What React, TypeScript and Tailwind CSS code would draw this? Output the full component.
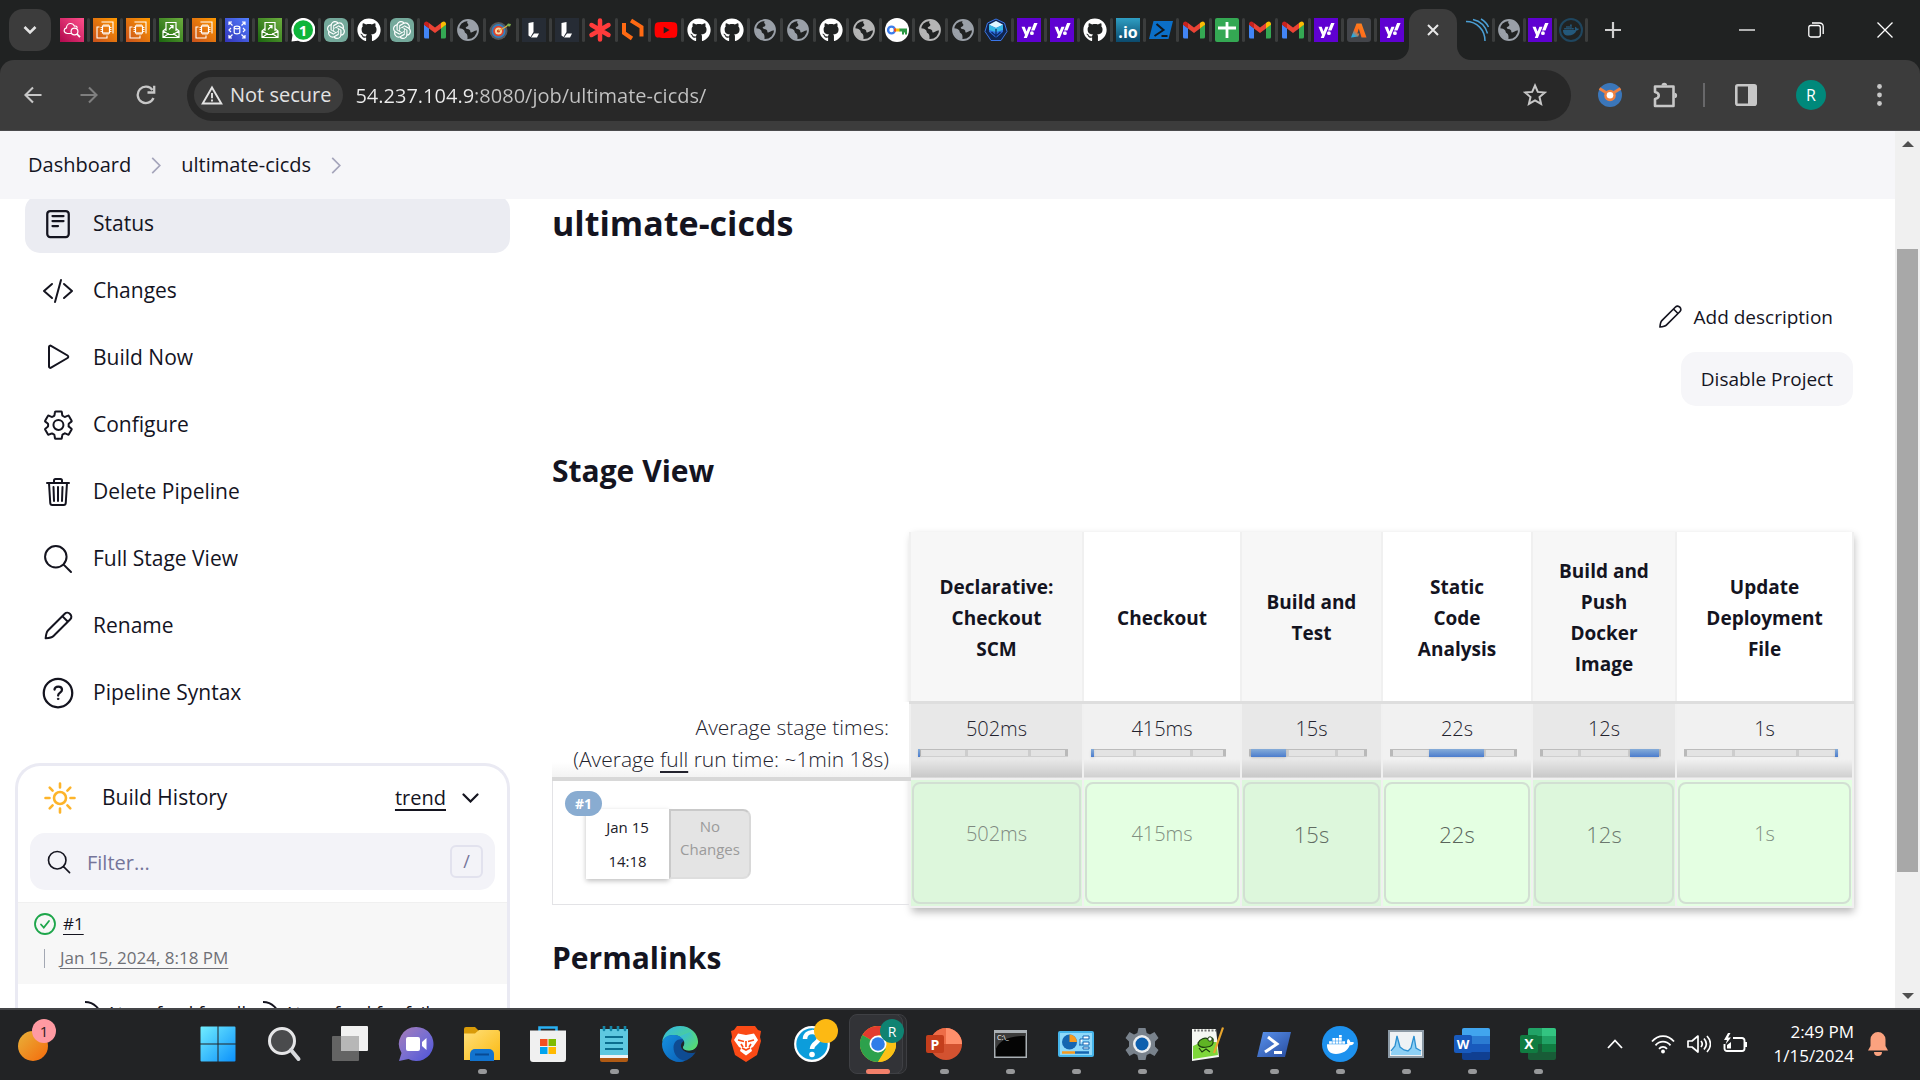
import React from "react";
import { FaGithub, FaYoutube, FaYahoo, FaDocker } from "react-icons/fa";
import { SiOpenai } from "react-icons/si";

type Kids = { children: React.ReactNode };

/* ---------- Tab favicons (24 x 24) ---------- */

function Aws({ id, from, to, children }: Kids & { id: string; from: string; to: string }) {
  return (
    <svg viewBox="0 0 24 24" className="size-6" fill="none" stroke="#fff" strokeWidth="1.2">
      <defs>
        <linearGradient id={id} x1="0" y1="1" x2="1" y2="0">
          <stop offset="0" stopColor={from} />
          <stop offset="1" stopColor={to} />
        </linearGradient>
      </defs>
      <rect width="24" height="24" fill={`url(#${id})`} stroke="none" />
      {children}
    </svg>
  );
}

const CloudWatch = () => (
  <Aws id="aws-pink" from="#b0084d" to="#ff4f8b">
    <path d="M11 15.500H7.500C5.500 15.500 4 14 4.200 12.300c.1-1.500 1.200-2.300 2.300-2.500C6.500 7.500 8.300 5.500 10.500 5.500c2 0 3.300 1.200 3.900 2.600 1.500-.4 2.600.5 2.900 1.700" />
    <circle cx="14.500" cy="13.500" r="3.400" />
    <path d="M17 16l3 3.200" strokeWidth="1.800" />
  </Aws>
);
const Ec2 = () => (
  <Aws id="aws-orange" from="#c8511b" to="#ff9900">
    <rect x="9.500" y="8" width="7" height="7" />
    <path d="M11 8V6M13 8V6M15 8V6M11 17v-2M13 17v-2M15 17v-2M7.500 9.500h2M7.500 11.500h2M7.500 13.500h2M16.500 9.500h2M16.500 11.500h2M16.500 13.500h2" strokeWidth=".9" />
    <path d="M9 4.500V4h11v11h-.5M6.500 9H4v11h10v-2.500" strokeWidth="1.100" />
  </Aws>
);
const Ses = () => (
  <Aws id="aws-green" from="#1b660f" to="#6cae3e">
    <path d="M7 13V4.500h10V13M7 10.500L4 13v6.500h16V13l-3-2.500M4 13l6 3.500h4l6-3.500M4 19.500l6-4M20 19.500l-6-4M10 11.500l4-4M11 7.500h3v3" />
  </Aws>
);
const Asg = () => (
  <Aws id="aws-blue" from="#3334b9" to="#527fff">
    <path d="M4 7V4h3M4 4l3.500 3.500M20 7V4h-3M20 4l-3.500 3.500M4 17v3h3M4 20l3.500-3.500M20 17v3h-3M20 20l-3.500-3.500M6 10l-2 2 2 2M18 10l2 2-2 2" />
    <ellipse cx="12" cy="9.500" rx="2.800" ry="1.300" />
    <path d="M9.200 9.500v5c0 1.700 5.600 1.700 5.600 0v-5" />
  </Aws>
);
const Whatsapp = () => (
  <span className="relative flex size-6 items-center justify-center text-white">
    <svg viewBox="0 0 24 24" className="absolute size-6">
      <path d="M.5 23.500L1.500 17A12 12 0 1 1 7 22.700z" fill="#fff" />
      <circle cx="12.200" cy="12" r="9.800" fill="#0fb53a" />
    </svg>
    <span className="relative text-[15px] leading-none font-bold">1</span>
  </span>
);
const Gpt = () => (
  <span className="flex size-6 items-center justify-center rounded-md bg-[#74a99b] text-white">
    <SiOpenai className="size-[18px]" />
  </span>
);
const Github = () => <FaGithub className="size-6 text-white" />;
const Gmail = () => (
  <svg viewBox="0 0 24 24" className="size-6">
    <path d="M1 19.500V6.500l5 3.800V20.500H2.500A1.500 1.500 0 0 1 1 19z" fill="#4285f4" />
    <path d="M18 20.500V10.300l5-3.800V19a1.500 1.500 0 0 1-1.500 1.500z" fill="#34a853" />
    <path d="M18 10.500V5l1.200-.9C21 2.800 23 4 23 6v.8z" fill="#fbbc04" />
    <path d="M6 10.500V5l6 4.500L18 5v5.500L12 15z" fill="#ea4335" />
    <path d="M1 6.800V6c0-2 2.200-3.200 3.800-1.900L6 5v5.500z" fill="#c5221f" />
  </svg>
);
function Globe({ light = false }: { light?: boolean }) {
  return (
    <svg viewBox="0 0 24 24" className="size-6">
      <circle cx="12" cy="12" r="10" fill="#202222" stroke={light ? "#b5b5b5" : "#9aa0a8"} strokeWidth="1.800" />
      <path
        d="M12 2.500c-1 1-1.200 2.300-.2 3.300 1.300 1 .3 2.700-1.100 2.900-1.500.2-1.200 1.900.3 2.200 2.500.2 3.600 1.200 3.300 3 .6 1 2.300.3 3.200-.3 1.500-1 2.800-1.200 4-.8C22.800 7 18 2 12 2.500zM2.600 10.200c1.700-.3 4.300.4 5.700 2.300.6 1.300.3 2.200 1.600 2.700 1.600.8 2 3.600 1.400 6.200C6 21.200 2 16.500 2.600 10.200z"
        fill={light ? "#b5b5b5" : "#9aa0a8"}
      />
    </svg>
  );
}
const LightGlobe = () => <Globe light />;
const Dart = () => (
  <svg viewBox="0 0 24 24" className="size-6">
    <circle cx="9.500" cy="13" r="9" fill="#55585c" />
    <circle cx="9.500" cy="13" r="7" fill="#2f7ec1" />
    <circle cx="9.500" cy="13" r="5.300" fill="#e2442c" />
    <circle cx="9.500" cy="13" r="3.500" fill="#f6d6a6" />
    <circle cx="9.500" cy="13" r="1.600" fill="#d33a1c" />
    <path d="M9.500 13L18 8" stroke="#e0b040" strokeWidth="1.200" />
    <path d="M17 8l2-2.500 3 .5-1 2.500z" fill="#7fb04c" />
  </svg>
);
const Linode = () => (
  <svg viewBox="0 0 24 24" className="size-6">
    <rect width="24" height="24" fill="#262c35" />
    <path d="M6.500 5l5-1v10l-3 5-2-1.500zM12 15.500h5l-2 4H9z" fill="#fff" />
  </svg>
);
const Asterisk = () => (
  <svg viewBox="0 0 24 24" className="size-6" stroke="#ff3b3b" strokeWidth="4.500" strokeLinecap="round">
    <path d="M12 2.500v19M3.500 7l17 10M20.500 7l-17 10" />
  </svg>
);
const Hex = () => (
  <svg viewBox="0 0 24 24" className="size-6" fill="none" stroke="#ff6a13" strokeWidth="4">
    <path d="M3 5v10l8 5.500M10 2.500L20.500 9v9.500" />
  </svg>
);
const Youtube = () => <FaYoutube className="size-6 text-[#f00]" />;
const KeyIcon = () => (
  <svg viewBox="0 0 24 24" className="size-6">
    <circle cx="12" cy="12" r="12" fill="#fff" />
    <circle cx="6.500" cy="12" r="3.400" fill="none" stroke="#3b7ded" strokeWidth="2.400" />
    <path d="M9 10.500h6v3H9z" fill="#fbbc04" />
    <path d="M14.500 10.500H22v6h-2v-2h-1v2h-2v-3h-2.500z" fill="#2c9a45" />
    <path d="M9 10.500h2v3H9z" fill="#ea4335" />
  </svg>
);
const Kube = () => (
  <svg viewBox="0 0 24 24" className="size-6">
    <path d="M12 1l8.500 4 2.500 8.500-6 9H7l-6-9L3.500 5z" fill="#10254f" stroke="#3a76e8" />
    <path d="M12 3l7 3.800v7L12 20l-7-6.200v-7z" fill="#2f6fe0" />
    <path d="M12 3l7 3.800L12 10 5 6.800z" fill="#dff6ff" />
    <path d="M5 6.800L12 10v4l-7-2zM19 6.800L12 10v4l7-2z" fill="#35b7e6" />
    <path d="M7.500 14l4.500 4 4.500-4M12 11v9" stroke="#0b2c66" strokeWidth="1.300" fill="none" />
  </svg>
);
const Yahoo = () => (
  <span className="flex size-6 items-center justify-center bg-[#5f01d1] text-white">
    <FaYahoo className="size-[17px]" />
  </span>
);
const DotIo = () => (
  <span className="flex size-6 items-end justify-center bg-linear-to-b from-[#2f9fc4] to-[#0b4a6c] text-[16px] leading-5 font-bold text-white">
    .io
  </span>
);
const PsSmall = () => (
  <svg viewBox="0 0 24 24" className="size-6">
    <path d="M4.500 3H24l-4.500 18H0z" fill="#0b6fc8" />
    <path d="M7.500 6l7 6-9 6M12.500 18h6" stroke="#101820" strokeWidth="2" fill="none" />
  </svg>
);
const Sheets = () => (
  <svg viewBox="0 0 24 24" className="size-6">
    <rect width="24" height="24" rx="2" fill="#34a853" />
    <path d="M12 4v16M3 10h18" stroke="#fff" strokeWidth="2.800" />
  </svg>
);
const Ahrefs = () => (
  <svg viewBox="0 0 24 24" className="size-6">
    <defs>
      <linearGradient id="a-grad" x1="0" y1="1" x2="1" y2="0">
        <stop offset=".15" stopColor="#27a9e0" />
        <stop offset=".4" stopColor="#ff6a1a" />
        <stop offset="1" stopColor="#ff8a1f" />
      </linearGradient>
    </defs>
    <rect width="24" height="24" rx="3" fill="#43454a" />
    <path d="M4 19.500L9.500 5.500h5l5 14h-5l-2.700-9-1.500 5h2l-1 3-7 1z" fill="url(#a-grad)" />
  </svg>
);
const Sonar = () => (
  <svg viewBox="0 0 24 24" className="size-6" fill="none" stroke="#4b9fd5" strokeWidth="1.500">
    <path d="M0 3.500C11 3.500 19 12 19 23M7 1.500c7 1.500 12.500 7 14.500 14M15 1c3.500 2 6 4.500 7.500 8" />
  </svg>
);
const DockerDim = () => (
  <span className="flex size-6 items-center justify-center rounded-full border-2 border-[#1f465f] text-[#24597c]">
    <FaDocker className="size-4" />
  </span>
);

const leftTabs: [string, React.FC][] = [
  ["CloudWatch", CloudWatch], ["EC2", Ec2], ["EC2", Ec2], ["SES", Ses], ["EC2", Ec2], ["Auto Scaling", Asg],
  ["SES", Ses], ["WhatsApp", Whatsapp], ["ChatGPT", Gpt], ["GitHub", Github], ["ChatGPT", Gpt], ["Gmail", Gmail],
  ["Page", Globe], ["Target", Dart], ["Linode", Linode], ["Linode", Linode], ["Asterisk", Asterisk], ["Hex", Hex],
  ["YouTube", Youtube], ["GitHub", Github], ["GitHub", Github], ["Page", Globe], ["Page", Globe], ["GitHub", Github],
  ["Page", LightGlobe], ["Passwords", KeyIcon], ["Page", LightGlobe], ["Page", Globe], ["Kubernetes", Kube],
  ["Yahoo", Yahoo], ["Yahoo", Yahoo], ["GitHub", Github], ["IO", DotIo], ["PowerShell", PsSmall], ["Gmail", Gmail],
  ["Sheets", Sheets], ["Gmail", Gmail], ["Gmail", Gmail], ["Yahoo", Yahoo], ["A", Ahrefs], ["Yahoo", Yahoo],
];
const rightTabs: [string, React.FC][] = [["SonarQube", Sonar], ["Page", Globe], ["Yahoo", Yahoo], ["Docker", DockerDim]];

const Sep = () => <span className="h-6 w-[3px] shrink-0 rounded-full bg-[#3b3d3d]" />;

function TabStrip() {
  return (
    <div className="flex h-[60px] shrink-0 items-center bg-[#202222] text-[#dcdcdc]">
      <button aria-label="Search tabs" className="ml-[9px] flex h-[42px] w-[42px] shrink-0 items-center justify-center rounded-[14px] bg-[#3c3c3c]">
        <svg viewBox="0 0 14 10" className="w-3.5" fill="none" stroke="#e3e3e3" strokeWidth="2.600">
          <path d="M1.500 2L7 7.500 12.500 2" />
        </svg>
      </button>
      <div className="ml-[9px] flex items-center gap-[3px]">
        {leftTabs.map(([name, Icon], i) => (
          <React.Fragment key={i}>
            <button aria-label={name} className="size-6 shrink-0"><Icon /></button>
            {i < leftTabs.length - 1 && <Sep />}
          </React.Fragment>
        ))}
      </div>
      <div className="relative ml-[5px] flex h-[51px] w-12 shrink-0 items-center justify-center self-end rounded-t-[14px] bg-[#3c3c3c] pb-[9px]">
        <svg viewBox="0 0 14 14" className="absolute bottom-0 -left-3.5 size-3.5"><path d="M14 0v14H0A14 14 0 0 0 14 0z" fill="#3c3c3c" /></svg>
        <svg viewBox="0 0 14 14" className="absolute -right-3.5 bottom-0 size-3.5"><path d="M0 0v14h14A14 14 0 0 1 0 0z" fill="#3c3c3c" /></svg>
        <button aria-label="Close tab">
          <svg viewBox="0 0 12 12" className="size-3" stroke="#e8e8e8" strokeWidth="2"><path d="M1 1l10 10M11 1L1 11" /></svg>
        </button>
      </div>
      <div className="ml-[9px] flex items-center gap-[2px]">
        {rightTabs.map(([name, Icon], i) => (
          <React.Fragment key={i}>
            <button aria-label={name} className="size-6 shrink-0"><Icon /></button>
            <Sep />
          </React.Fragment>
        ))}
      </div>
      <button aria-label="New tab" className="ml-[17px] shrink-0">
        <svg viewBox="0 0 16 16" className="size-4" stroke="#d0d0d0" strokeWidth="2.200"><path d="M8 0v16M0 8h16" /></svg>
      </button>
      <div className="ml-auto flex shrink-0 items-center gap-[53px] pr-[27px]">
        <button aria-label="Minimize"><svg viewBox="0 0 16 16" className="size-4" stroke="#fff" strokeWidth="1.300"><path d="M0 8h16" /></svg></button>
        <button aria-label="Restore">
          <svg viewBox="0 0 16 16" className="size-4" fill="none" stroke="#fff" strokeWidth="1.300">
            <rect x=".8" y="3.500" width="11.500" height="11.500" rx="2" /><path d="M4 1h7.500C13.800 1 15.200 2.500 15.200 4.500V12" />
          </svg>
        </button>
        <button aria-label="Close"><svg viewBox="0 0 16 16" className="size-4" stroke="#fff" strokeWidth="1.300"><path d="M.5.5l15 15M15.500.5l-15 15" /></svg></button>
      </div>
    </div>
  );
}

function Toolbar() {
  return (
    <div className="bg-[#202222]">
      <div className="flex h-[71px] items-center rounded-t-[14px] border-b border-[#4a4a4d] bg-[#3c3c3c] pr-[38px] pl-6 text-[#c7c7c7]">
        <div className="flex shrink-0 items-center gap-[38px]">
          <button aria-label="Back">
            <svg viewBox="0 0 19 19" className="size-[18px]" fill="none" stroke="currentColor" strokeWidth="2.200"><path d="M18.500 9.500H2M9.500 1.500l-8 8 8 8" /></svg>
          </button>
          <button aria-label="Forward" className="text-[#7f7f7f]">
            <svg viewBox="0 0 19 19" className="size-[18px]" fill="none" stroke="currentColor" strokeWidth="2.200"><path d="M.5 9.500H17M9.500 1.500l8 8-8 8" /></svg>
          </button>
          <button aria-label="Reload">
            <svg viewBox="0 0 20 20" className="size-5" fill="none" stroke="currentColor" strokeWidth="2.300"><path d="M17.500 13A8.200 8.200 0 1 1 16.500 5M18.200.8v6.700h-6.700" /></svg>
          </button>
        </div>
        <div className="ml-[31px] flex h-[51px] min-w-0 flex-1 items-center rounded-full bg-[#282828] pr-6 pl-[7px]">
          <button className="flex h-9 shrink-0 items-center gap-[7px] rounded-full bg-[#3c3c3c] pr-3 pl-[7px] text-[20px] text-[#e3e3e3]">
            <svg viewBox="0 0 22 20" className="w-[22px]" fill="none" stroke="currentColor" strokeWidth="1.900">
              <path d="M11 2.500L20.300 18.500H1.700zM11 8v5.200M11 14.500v2" />
            </svg>
            Not secure
          </button>
          <input
            aria-label="Address"
            defaultValue="54.237.104.9:8080/job/ultimate-cicds/"
            className="ml-3 h-9 min-w-0 flex-1 bg-linear-to-r from-[#ececec] from-[118px] to-[#c4c4c4] to-[118px] bg-clip-text text-[20px] text-transparent outline-none"
          />
          <button aria-label="Bookmark" className="shrink-0">
            <svg viewBox="0 0 24 24" className="size-6" fill="none" stroke="currentColor" strokeWidth="2"><path d="M12 2.500l2.800 6.400 7 .6-5.300 4.600 1.600 6.800L12 17.300l-6.100 3.600 1.600-6.800L2.200 9.500l7-.6z" /></svg>
          </button>
        </div>
        <div className="ml-[27px] flex shrink-0 items-center">
          <button aria-label="Extension">
            <svg viewBox="0 0 24 24" className="size-6">
              <circle cx="12" cy="12" r="12" fill="#3b76b9" />
              <path d="M1.500 5.500L8 9.500h8l6.500-4" stroke="#ee8142" strokeWidth="2.800" fill="none" />
              <circle cx="12" cy="12.500" r="5.800" fill="#ee8142" /><circle cx="12" cy="12.200" r="3.300" fill="#fff" />
            </svg>
          </button>
          <button aria-label="Extensions" className="ml-[30px]">
            <svg viewBox="0 0 26 26" className="size-[26px]" fill="none" stroke="currentColor" strokeWidth="2.600" strokeLinejoin="round">
              <path d="M3 4.500h18.500v19.500H3v-7c5-1 5-6 0-7z" />
              <path d="M9.500 3.500a2.800 2.800 0 0 1 5.600 0zM22.500 10.800a2.600 2.600 0 0 1 0 5.200z" fill="currentColor" stroke="none" />
            </svg>
          </button>
          <span className="ml-[25px] h-6 w-[2px] bg-[#68686a]" />
          <button aria-label="Side panel" className="ml-[30px]">
            <svg viewBox="0 0 22 22" className="size-[22px]"><rect x="1.300" y="1.300" width="19.400" height="19.400" rx="1.500" fill="none" stroke="currentColor" strokeWidth="2.600" /><path d="M13 1h8v20h-8z" fill="currentColor" /></svg>
          </button>
          <button className="ml-[39px] flex size-[30px] items-center justify-center rounded-full bg-[#00897b] text-[16px] text-white">R</button>
          <button aria-label="Menu" className="ml-[51px]">
            <svg viewBox="0 0 5 22" className="h-[22px] w-[5px]" fill="currentColor"><circle cx="2.500" cy="2.500" r="2.400" /><circle cx="2.500" cy="11" r="2.400" /><circle cx="2.500" cy="19.500" r="2.400" /></svg>
          </button>
        </div>
      </div>
    </div>
  );
}

/* ---------- Jenkins page ---------- */

function Line({ children, size = "size-8", w = 32 }: Kids & { size?: string; w?: number }) {
  return (
    <svg viewBox="0 0 512 512" className={`${size} shrink-0`} fill="none" stroke="currentColor" strokeWidth={w} strokeLinecap="round" strokeLinejoin="round">
      {children}
    </svg>
  );
}
const pencil = (
  <path d="M364 59L95 328c-18 18-30 50-37 126 76-7 108-19 126-37l269-269c54-54-35-143-89-89zM325 98l89 89" />
);
const search = (
  <>
    <circle cx="221" cy="221" r="172" />
    <path d="M346 346l118 118" />
  </>
);
const menu: [string, React.ReactNode][] = [
  ["Status", <Line key="i" w={36}><rect x="84" y="48" width="344" height="416" rx="48" /><path d="M168 128h176M168 208h176M168 288h88" /></Line>],
  ["Changes", <Line key="i"><path d="M160 368L32 256l128-112M352 368l128-112-128-112M304 80l-96 352" /></Line>],
  ["Build Now", <Line key="i"><path d="M112 81v310c0 17 18 28 33 20l264-155c15-9 15-31 0-40L145 61c-15-8-33 3-33 20z" /></Line>],
  ["Configure", <Line key="i"><path d="M262 176a80 80 0 1 0 2 160 80 80 0 0 0-2-160zm165 80a165 165 0 0 1-2 22l47 37a11 11 0 0 1 2 14l-44 76a11 11 0 0 1-14 5l-46-19a16 16 0 0 0-15 2 176 176 0 0 1-22 12 16 16 0 0 0-9 13l-7 49a11 11 0 0 1-11 10h-88a12 12 0 0 1-11-9l-7-49a16 16 0 0 0-9-13 165 165 0 0 1-22-13 16 16 0 0 0-15-1l-46 18a11 11 0 0 1-14-5l-44-76a11 11 0 0 1 3-14l39-30a16 16 0 0 0 6-14 161 161 0 0 1 0-25 16 16 0 0 0-6-14l-39-30a11 11 0 0 1-3-14l44-76a11 11 0 0 1 14-5l46 19a16 16 0 0 0 15-2 176 176 0 0 1 22-12 16 16 0 0 0 9-13l7-49a11 11 0 0 1 11-10h88a12 12 0 0 1 11 9l7 49a16 16 0 0 0 9 13 165 165 0 0 1 22 13 16 16 0 0 0 15 1l46-18a11 11 0 0 1 14 5l44 76a11 11 0 0 1-3 14l-39 30a16 16 0 0 0-6 14c0 4 1 8 1 12z" /></Line>],
  ["Delete Pipeline", <Line key="i"><path d="M112 112l20 320c1 18 14 32 32 32h184c18 0 31-14 32-32l20-320M80 112h352M192 112V72a24 24 0 0 1 24-24h80a24 24 0 0 1 24 24v40M256 176v224M184 176l8 224M328 176l-8 224" /></Line>],
  ["Full Stage View", <Line key="i">{search}</Line>],
  ["Rename", <Line key="i">{pencil}</Line>],
  ["Pipeline Syntax", <Line key="i" w={36}><circle cx="256" cy="256" r="228" /><path d="M200 202c1-20 20-50 60-50s60 26 60 52c0 46-62 44-62 92" /><circle cx="257" cy="350" r="12" fill="currentColor" strokeWidth="16" /></Line>],
];

function Crumb({ children }: Kids) {
  return (
    <>
      <a href="#">{children}</a>
      <svg viewBox="0 0 10 18" className="h-[17px] w-2.5" fill="none" stroke="#a5a5bb" strokeWidth="1.800"><path d="M1 1l8 8-8 8" /></svg>
    </>
  );
}

function Sidebar() {
  return (
    <aside className="w-[512px] shrink-0 pr-0.5">
      <nav className="-mt-1 flex flex-col gap-[9px] pl-[25px]">
        {menu.map(([label, icon], i) => (
          <a key={label} href="#" className={`flex h-[58px] items-center gap-[19px] rounded-[15px] pl-[17px] text-[21px] ${i === 0 ? "bg-[#ebecf2]" : ""}`}>
            {icon}
            {label}
          </a>
        ))}
      </nav>
      <section className="mt-[41px] ml-[15px] rounded-t-[25px] border-[3px] border-b-0 border-[#eaeaf3]">
        <div className="mb-[3px] flex h-16 items-center pr-7 pl-[26px] text-[20px]">
          <svg viewBox="0 0 32 32" className="size-8" fill="none" stroke="#fdb42a" strokeWidth="2.600" strokeLinecap="round">
            <circle cx="16" cy="16" r="6" />
            <path d="M16 1.500v4M16 26.500v4M1.500 16h4M26.500 16h4M5.700 5.700l2.900 2.900M23.400 23.400l2.900 2.900M5.700 26.300l2.900-2.900M23.400 8.600l2.900-2.900" />
          </svg>
          <h2 className="ml-[26px] text-[21px]">Build History</h2>
          <a href="#" className="ml-auto underline decoration-2 underline-offset-4">trend</a>
          <button aria-label="Collapse" className="ml-4">
            <svg viewBox="0 0 17 10" className="w-[17px]" fill="none" stroke="currentColor" strokeWidth="2.200" strokeLinecap="round"><path d="M1.500 1.500l7 7 7-7" /></svg>
          </button>
        </div>
        <div className="mx-3 flex h-[57px] items-center rounded-[15px] bg-[#f3f3f8] pr-3 pl-4">
          <Line size="size-[26px]">{search}</Line>
          <input aria-label="Filter builds" placeholder="Filter..." className="ml-[15px] h-10 min-w-0 flex-1 bg-transparent pt-0.5 text-[20px] outline-none placeholder:text-[#75759a]" />
          <kbd className="flex size-[33px] items-center justify-center rounded-md border-2 border-[#e2e2ee] font-[Open_Sans] text-[18px] text-[#75759a]">/</kbd>
        </div>
        <div className="mt-3 h-[82px] border-t border-[#f0f0f0] bg-[#f7f7f7] pl-4 text-[17px]">
          <div className="flex h-[42px] items-center gap-[7px]">
            <svg viewBox="0 0 22 22" className="size-[22px]" fill="none" stroke="#1ea64b" strokeWidth="1.800" strokeLinecap="round"><circle cx="11" cy="11" r="10" /><path d="M7 11.500l2.800 3L15 8" /></svg>
            <a href="#" className="underline underline-offset-4">#1</a>
          </div>
          <div className="ml-[10px] flex h-[26px] items-center gap-[15px] text-[#6f7076]">
            <span className="h-[19px] w-px bg-[#a3a8b3]" />
            <a href="#" className="underline underline-offset-4">Jan 15, 2024, 8:18 PM</a>
          </div>
        </div>
        <div className="flex gap-4 pt-[17px] pl-[66px] text-[18px] leading-6">
          {["Atom feed for all", "Atom feed for failures"].map((t) => (
            <a key={t} href="#" className="flex items-start gap-1 whitespace-nowrap">
              <svg viewBox="0 0 18 18" className="size-[18px]" fill="none" stroke="currentColor" strokeWidth="2"><path d="M1 1c9 0 16 7 16 16M1 9c5 0 8 3 8 8" /></svg>
              {t}
            </a>
          ))}
        </div>
      </section>
    </aside>
  );
}

type Stage = { name: string[]; time: string; from: number; to: number; cell: string };
const stages: Stage[] = [
  { name: ["Declarative:", "Checkout", "SCM"], time: "502ms", from: 0, to: 1, cell: "text-[20px] text-[#7f8a80]" },
  { name: ["Checkout"], time: "415ms", from: 0, to: 2, cell: "text-[20px] text-[#7f8e80]" },
  { name: ["Build and", "Test"], time: "15s", from: 2, to: 31, cell: "text-[22px] text-[#616c62]" },
  { name: ["Static", "Code", "Analysis"], time: "22s", from: 31, to: 74, cell: "text-[22px] text-[#5a645b]" },
  { name: ["Build and", "Push", "Docker", "Image"], time: "12s", from: 74, to: 98, cell: "text-[22px] text-[#6b776e]" },
  { name: ["Update", "Deployment", "File"], time: "1s", from: 98, to: 100, cell: "text-[20px] text-[#7f8e80]" },
];

function StageTable() {
  return (
    <div className="relative mt-[41px] mr-px">
      <div className="absolute inset-y-0 right-0 left-[27.500%] border border-[#efefef] shadow-[2px_4px_8px_rgba(0,0,0,0.28)]" />
      <table className="relative w-full table-fixed border-collapse text-center">
        <colgroup>
          <col className="w-[358px]" />
          <col className="w-[173px]" />
          <col className="w-[158px]" />
          <col className="w-[141px]" />
          <col className="w-[150px]" />
          <col className="w-[144px]" />
          <col className="w-[177px]" />
        </colgroup>
        <thead>
          <tr className="h-[170px]">
            <td />
            {stages.map((s, i) => (
              <th key={i} scope="col" className={`border-2 border-t-0 border-[#f0f0f0] border-b-[3px] border-b-[#dedede] px-0 pt-1 pb-0 align-middle text-[19px] leading-[31px] font-bold ${i % 2 ? "bg-white" : "bg-[#f7f7f7]"}`}>
                {s.name.map((n) => <span key={n} className="block">{n}</span>)}
              </th>
            ))}
          </tr>
        </thead>
        <tbody>
          <tr className="h-[77px]">
            <th scope="row" className="border-b-4 border-[#d8d8d8] bg-linear-to-b from-white from-80% to-[#f3f3f3] p-0 pr-5 text-right align-top text-[21px] leading-8 font-light text-[#22222d]">
              <span className="mt-[9px] block">Average stage times:</span>
              <span className="block whitespace-nowrap">(Average <span className="underline decoration-2 underline-offset-4">full</span> run time: ~1min 18s)</span>
            </th>
            {stages.map((s, i) => (
              <td key={i} className={`border-x-2 border-[#f0f0f0] p-0 align-top text-[20px] font-light text-[#22222d] ${i % 2 ? "bg-linear-to-b from-[#f1f1f1] from-75% to-[#cfcfcf]" : "bg-linear-to-b from-[#e8e8e8] from-75% to-[#c8c8c8]"}`}>
                <div className="mt-[9px] leading-8">{s.time}</div>
                <div className="relative mt-1 mr-3.5 ml-[7px] flex h-2 border-y border-t-[#bcbcbc] border-b-[#cfcfcf] bg-[#e3e3e3]">
                  <span className="absolute inset-y-0 left-0 w-[3px] bg-[#b9b9b9]" />
                  <span className="absolute inset-y-0 left-[31%] w-[3px] bg-[#cdcdcd]" />
                  <span className="absolute inset-y-0 left-[73%] w-[3px] bg-[#cdcdcd]" />
                  <span className="absolute inset-y-0 right-0 w-[3px] bg-[#b9b9b9]" />
                  <span className="absolute -inset-y-px bg-linear-to-b from-[#86acd8] to-[#4b7ccd] shadow-sm" style={{ left: `${s.from}%`, width: `${s.to - s.from}%` }} />
                </div>
              </td>
            ))}
          </tr>
          <tr className="h-[128px]">
            <td className="p-0 text-left align-top">
              <div className="h-[124px] border-b border-l border-[#e3e3e6] pt-[28px] pl-[33px]">
                <div className="relative flex h-[70px] w-fit">
                  <a href="#" className="absolute -top-[18px] -left-[21px] z-10 flex h-[25px] w-[37px] items-center justify-center rounded-full bg-[#89acd1] text-[14px] font-bold text-white">#1</a>
                  <div className="flex w-[83px] flex-col items-center justify-center bg-white text-[15px] leading-[34px] text-[#20202a] shadow-[0_2px_5px_rgba(0,0,0,0.25)]">
                    <span>Jan 15</span>
                    <span>14:18</span>
                  </div>
                  <div className="flex w-[82px] flex-col items-center rounded-r-lg border-2 border-[#c9c9c9] border-r-[#d8d8d8] border-b-[#dedede] bg-[#e4e4e4] pt-1 text-[15px] leading-[23px] text-[#9b9b9b]">
                    <span>No</span>
                    <span>Changes</span>
                  </div>
                </div>
              </div>
            </td>
            {stages.map((s, i) => (
              <td key={i} className={`border-2 border-[#f0f0f0] p-px pt-0.5 align-top ${i % 2 ? "bg-[#e4ffe2]" : "bg-[#ddf7dc]"}`}>
                <div className={`flex h-[122px] items-center justify-center rounded-lg border-2 border-[#d2dfd3] pb-[18px] leading-8 font-light ${s.cell}`}>{s.time}</div>
              </td>
            ))}
          </tr>
        </tbody>
      </table>
    </div>
  );
}

function Page() {
  return (
    <div className="flex min-h-0 flex-1 overflow-hidden bg-white text-[#14141f]">
      <div className="flex min-w-0 flex-1 flex-col">
        <nav aria-label="Breadcrumb" className="z-10 flex h-[68px] shrink-0 items-center gap-5 bg-[#f6f6f9] pl-7 text-[20px]">
          <Crumb>Dashboard</Crumb>
          <Crumb>ultimate-cicds</Crumb>
        </nav>
        <div className="flex min-h-0 flex-1 overflow-hidden">
          <Sidebar />
          <main className="min-w-0 flex-1 pr-[42px] pl-10">
            <h1 className="text-[34px] leading-[48px] font-bold">ultimate-cicds</h1>
            <div className="mt-12 flex flex-col items-end">
              <button className="flex h-11 items-center gap-[11px] pr-5 text-[19px]">
                <Line size="size-[26px]">{pencil}</Line>
                Add description
              </button>
              <button className="mt-[13px] h-[54px] rounded-[15px] bg-[#f6f6f9] px-5 text-[19px]">Disable Project</button>
            </div>
            <h2 className="mt-[45px] text-[30px] leading-10 font-bold">Stage View</h2>
            <StageTable />
            <h2 className="mt-[30px] text-[30px] leading-10 font-bold">Permalinks</h2>
          </main>
        </div>
      </div>
      <div className="flex w-[25px] shrink-0 flex-col items-center bg-[#f0f0f0]">
        <svg viewBox="0 0 12 6" className="mt-2.5 h-1.5 w-3 shrink-0" fill="#505050"><path d="M0 6l6-6 6 6z" /></svg>
        <div className="mt-[102px] w-[21px] grow-[623] basis-0 bg-[#a8a8a8]" />
        <div className="grow-[121] basis-0" />
        <svg viewBox="0 0 12 6" className="mb-[9px] h-1.5 w-3 shrink-0" fill="#505050"><path d="M0 0l6 6 6-6z" /></svg>
      </div>
    </div>
  );
}

/* ---------- Taskbar ---------- */

function App36({ children }: Kids) {
  return <svg viewBox="0 0 36 36" className="size-9">{children}</svg>;
}
function Grad({ id, a, b, c }: { id: string; a: string; b: string; c?: string }) {
  return (
    <linearGradient id={id} x1="0" y1="0" x2="1" y2="1">
      <stop offset="0" stopColor={a} />
      {c && <stop offset=".5" stopColor={c} />}
      <stop offset="1" stopColor={b} />
    </linearGradient>
  );
}

const dockApps: { name: string; running?: boolean; active?: boolean; icon: React.ReactNode }[] = [
  { name: "Start", icon: <App36><defs><linearGradient id="win" gradientUnits="userSpaceOnUse" x1="0" y1="0" x2="36" y2="36"><stop offset="0" stopColor="#72efff" /><stop offset="1" stopColor="#0a8ffb" /></linearGradient></defs><path d="M.5 1.500a1 1 0 0 1 1-1h16v17H.5zM18.500.5h16a1 1 0 0 1 1 1v16h-17zM.5 18.500h17v17h-16a1 1 0 0 1-1-1zM18.500 18.500h17v16a1 1 0 0 1-1 1h-16z" fill="url(#win)" /></App36> },
  { name: "Search", icon: <App36><circle cx="16" cy="15" r="12.500" fill="#4a4b4d" stroke="#e6e6e8" strokeWidth="3" /><path d="M25 24l7.500 9" stroke="#d8dade" strokeWidth="4" strokeLinecap="round" /></App36> },
  { name: "Task view", icon: <App36><rect x="9" y="0" width="27" height="25" rx="1" fill="#f1f1f1" /><rect x="0" y="10" width="27" height="25" rx="1" fill="#6b6b6b" opacity=".9" /><path d="M9 10h18v15H9z" fill="#b7b7b7" /></App36> },
  { name: "Chat", icon: <App36><defs><Grad id="chat" a="#a77bb8" b="#4d52d8" c="#7a6fd0" /></defs><path d="M18 1a17 17 0 1 1-7.500 32L1 35l2.500-8A17 17 0 0 1 18 1z" fill="url(#chat)" /><rect x="8" y="11" width="14" height="14" rx="2" fill="#fff" /><path d="M24 16l4.500-4v12L24 20z" fill="#fff" /></App36> },
  { name: "File Explorer", running: true, icon: <App36><defs><Grad id="fold" a="#ffe07a" b="#fbb911" /></defs><path d="M0 3a2 2 0 0 1 2-2h9l4 4-2 5H0z" fill="#d99b08" /><path d="M0 7.500h11L15 4h19a2 2 0 0 1 2 2v28H0z" fill="url(#fold)" /><path d="M6 35v-7a5 5 0 0 1 5-5h14a5 5 0 0 1 5 5v7z" fill="#1273ce" /><path d="M11 28.500h14" stroke="#084a93" strokeWidth="2" /></App36> },
  { name: "Store", icon: <App36><path d="M9.500 6V1.500h17V6" fill="none" stroke="#29b0f2" strokeWidth="2.600" /><path d="M0 4.500h36V33a3 3 0 0 1-3 3H3a3 3 0 0 1-3-3z" fill="#f0f0f0" /><path d="M10 13h7.500v7H10z" fill="#f25022" /><path d="M18.500 13H26v7h-7.500z" fill="#7fba00" /><path d="M10 21h7.500v7H10z" fill="#00a4ef" /><path d="M18.500 21H26v7h-7.500z" fill="#ffb900" /></App36> },
  { name: "Notepad", running: true, icon: <App36><path d="M4 3h28v31a2 2 0 0 1-2 2H6a2 2 0 0 1-2-2z" fill="#b05a13" /><path d="M4 3h28v29H4z" fill="#f0f4f6" /><path d="M4 3h28v26H4z" fill="#5ec8e0" /><path d="M9 11h18M9 17h18M9 23h18" stroke="#0b6d8e" strokeWidth="2" /><path d="M8 0v4M15 0v4M22 0v4M29 0v4" stroke="#1487a8" strokeWidth="2.600" strokeLinecap="round" /></App36> },
  { name: "Edge", icon: <App36><defs><Grad id="edge1" a="#31b6ea" b="#5fe25a" /><Grad id="edge2" a="#1590e0" b="#0b5fb5" /></defs><circle cx="18" cy="18" r="17.500" fill="#0e4b92" /><path d="M0 17C1 6 9 0 18 0c11 0 18 8 18 15.500 0 6-4.500 9-9 9-4 0-6-1.500-6-3 0-1 1.500-2 1.500-4.500C22.500 12 17 9 11 9 5 9 1 13 0 17z" fill="url(#edge1)" /><path d="M0 18C1 12 5 9 11 9c5 0 8.500 2 10 4.500-5-1.500-9.500 2-9.500 8 0 7 5 13 12 13-2 1-4 1.500-6 1.500C8 36 0 28 0 18z" fill="url(#edge2)" /><path d="M22 15c-3 1.500-4 5-2 8s7 5 13 3.500l3-3V16l-2 5c-2 3-5 3.500-7 3.500-4 0-6-1.500-6-3 0-1 1.500-2 1.500-4.500z" fill="#222325" opacity=".95" /><path d="M36 15.500c0 6-4.500 9-9 9-4 0-6-1.500-6-3 0-1 1.500-2 1.500-4.500 0-3-2-5-5-6.500L28 6z" fill="url(#edge1)" /></App36> },
  { name: "Brave", icon: <App36><path d="M9 0h18l3 4 3 1-1 6 1 4-4 14-11 7-11-7L3 15l1-4-1-6 3-1z" fill="#fb4a16" /><path d="M10 7.500l8 1.500 8-1.500 4 6.500-5 7-2 1 1 3-6 4.500-6-4.500 1-3-2-1-5-7z" fill="#fff" /><path d="M10 14l6 1.500M26 14l-6 1.500M18 15v6M14 22l4 2 4-2M13 18l2 3M23 18l-2 3" stroke="#fb4a16" strokeWidth="1.700" fill="none" /></App36> },
  { name: "Get Help", icon: <span className="relative"><App36><circle cx="18" cy="18" r="16.800" fill="#0c9ddb" stroke="#fff" strokeWidth="2.200" /><path d="M11 13c0-9 14-9 14-1 0 5-7 5-7 11" stroke="#fff" strokeWidth="4.500" fill="none" /><circle cx="18" cy="28.500" r="2.800" fill="#fff" /></App36><span className="absolute -top-[7px] -right-2 size-6 rounded-full bg-[#fdb913]" /></span> },
  { name: "Chrome", active: true, icon: <span className="relative"><App36><circle cx="18" cy="18" r="18" fill="#fbc116" /><path d="M18 18L2.400 9A18 18 0 0 1 33.600 9z" fill="#e33b2e" /><path d="M18 18L2.400 9A18 18 0 0 0 18 36l8-13z" fill="#2da14c" /><path d="M18 9h15.600A18 18 0 0 1 18 36l8-13z" fill="#fbc116" /><circle cx="18" cy="18" r="8.500" fill="#fff" /><circle cx="18" cy="18" r="6.800" fill="#2f7de9" /></App36><span className="absolute -top-[7px] -right-2 flex size-6 items-center justify-center rounded-full bg-[#0f8372] text-[14px] text-white">R</span></span> },
  { name: "PowerPoint", running: true, icon: <App36><circle cx="20" cy="18" r="16" fill="#d35230" /><path d="M20 2a16 16 0 0 1 16 16H20z" fill="#ff8f6b" /><path d="M20 2v16H4A16 16 0 0 1 20 2z" fill="#ed6c47" /><rect x="0" y="9" width="18" height="18" rx="2" fill="#c43e1c" /><text x="9" y="23.500" textAnchor="middle" fontSize="14" fontWeight="700" fill="#fff">P</text></App36> },
  { name: "Command Prompt", running: true, icon: <App36><rect x="2" y="4" width="33" height="28" fill="#aab0b5" /><rect x="3.500" y="7" width="30" height="23.500" fill="#050505" /><path d="M3.500 7h30v3c-12 0-26 2-30 14z" fill="#3c3c3c" /><text x="5" y="14" fontSize="7" fill="#fff">C:\_</text></App36> },
  { name: "Control Panel", running: true, icon: <App36><rect x="0" y="5" width="36" height="26" rx="2" fill="#45b4ea" /><rect x="2" y="7" width="32" height="22" fill="#8fd9fa" /><circle cx="11.500" cy="16" r="7.500" fill="#1565b0" /><path d="M11.500 16V8.500A7.500 7.500 0 0 1 19 16z" fill="#f79a1e" /><path d="M21 19h4M22 19v-6h3M25 10h6v3h-6zM25 16h6v3h-6zM25 21h6v2h-6z" fill="#fff" stroke="#1565b0" /><path d="M4 26.500h13" stroke="#f79a1e" strokeWidth="2.500" /><path d="M17 26.500h14" stroke="#1565b0" strokeWidth="2.500" /></App36> },
  { name: "Settings", running: true, icon: <App36><path d="M14.500 2h7l1.200 5 3.300 1.500 4.500-2.500 4 6-3.500 3.500v5L34.500 24l-4 6-4.500-2.500-3.300 1.500-1.200 5h-7l-1.200-5L10 27.500 5.500 30l-4-6L5 20.500v-5L1.500 12l4-6L10 8.500 13.300 7z" fill="#79828c" /><circle cx="18" cy="18" r="9" fill="#eceef0" /><circle cx="18" cy="18" r="6.500" fill="#0d5fae" /></App36> },
  { name: "Notepad++", running: true, icon: <App36><path d="M2 3l24 0 3 28-27 4z" fill="#f5f7f2" /><path d="M3 20c8-5 16-4 23.500-4l1.500 13-25 4z" fill="#7ed63a" /><path d="M8 17c2-4 7-6 10-4 2-3 6-1 5 2 1 3-2 6-6 6-4 1-9 0-9-4z" fill="#5fb324" stroke="#1c3d0f" strokeWidth="1.200" /><circle cx="20" cy="13" r="2.200" fill="#fff" stroke="#1c3d0f" /><path d="M9 22l3 4 4-3 4 3" stroke="#1c3d0f" fill="none" strokeWidth="1.200" /><path d="M4 4.500h22" stroke="#777" strokeWidth="2" strokeDasharray="2 1.500" /><path d="M33 1.500L24 27" stroke="#e9a52c" strokeWidth="2.200" /></App36> },
  { name: "PowerShell", running: true, icon: <App36><defs><Grad id="ps" a="#5a93ee" b="#274b9e" /></defs><path d="M7 6h28l-6 25H1z" fill="url(#ps)" /><path d="M12 11l9 7-12 8" stroke="#fff" strokeWidth="3" fill="none" /><path d="M18 26.500h8" stroke="#fff" strokeWidth="3" /></App36> },
  { name: "Docker", running: true, icon: <span className="flex size-9 items-center justify-center rounded-full bg-[#1d91ee] text-white"><FaDocker className="size-[27px]" /></span> },
  { name: "Resource Monitor", running: true, icon: <App36><rect x="0" y="4" width="36" height="28" fill="#8c9aa6" /><rect x="2" y="6" width="32" height="24" fill="#eef2f5" /><path d="M3 27l4-7 2-10 3 11 4 3 4 1 3-3 3-12 2 12 5 4v3H3z" fill="#8ed0f5" /><path d="M3 25l4-5 2-10 3 11 4 3 4 1 3-3 3-12 2 12 5 3" stroke="#2b8fd0" fill="none" strokeWidth="1.300" /></App36> },
  { name: "Word", running: true, icon: <App36><rect x="8" y="2" width="28" height="32" rx="2" fill="#103f91" /><path d="M8 18h28v8H8z" fill="#185abd" /><path d="M8 10h28v8H8z" fill="#2b7cd3" /><path d="M10 2h24a2 2 0 0 1 2 2v6H8V4a2 2 0 0 1 2-2z" fill="#41a5ee" /><rect x="0" y="9" width="18" height="18" rx="2" fill="#185abd" /><text x="9" y="23" textAnchor="middle" fontSize="13" fontWeight="700" fill="#fff">W</text></App36> },
  { name: "Excel", running: true, icon: <App36><rect x="8" y="2" width="28" height="32" rx="2" fill="#185c37" /><path d="M8 10h14v8H8z" fill="#107c41" /><path d="M22 10h14v8H22z" fill="#21a366" /><path d="M22 18h14v8H22z" fill="#107c41" /><path d="M10 2h12v8H8V4a2 2 0 0 1 2-2z" fill="#21a366" /><path d="M22 2h12a2 2 0 0 1 2 2v6H22z" fill="#33c481" /><rect x="0" y="9" width="18" height="18" rx="2" fill="#107c41" /><text x="9" y="23" textAnchor="middle" fontSize="14" fontWeight="700" fill="#fff">X</text></App36> },
];

function Taskbar() {
  return (
    <footer className="flex h-[72px] shrink-0 items-center border-t-2 border-[#444548] bg-[#222325] text-white">
      <button aria-label="Widgets" className="relative ml-[18px] size-[38px] shrink-0">
        <svg viewBox="0 0 38 38" className="size-[38px]"><defs><Grad id="wid" a="#e8b23a" b="#f56a0b" /></defs><circle cx="15" cy="20" r="15" fill="url(#wid)" /></svg>
        <span className="absolute -top-[7px] left-[14px] flex size-6 items-center justify-center rounded-full bg-[#ff9aa2] text-[15px] text-[#2a1a1c]">1</span>
      </button>
      <div className="ml-[129px] flex shrink-0 items-center">
        {dockApps.map((a) => (
          <button key={a.name} aria-label={a.name} className="relative flex h-[70px] w-[66px] items-center justify-center">
            {a.active && (
              <>
                <span className="absolute top-1 right-1 h-[60px] w-8 rounded-lg border border-[#3d3e42] bg-[#2b2c2f]" />
                <span className="absolute top-1 left-1 h-[60px] w-[54px] rounded-lg border border-[#3f4044] bg-[#323337]" />
                <span className="absolute bottom-1.5 h-[5px] w-6 rounded-full bg-[#f3806a]" />
              </>
            )}
            {a.running && <span className="absolute bottom-1.5 h-[5px] w-[9px] rounded-full bg-[#97989a]" />}
            <span className="relative mb-0.5 flex">{a.icon}</span>
          </button>
        ))}
      </div>
      <div className="ml-auto flex shrink-0 items-center pr-8 pb-0.5">
        <button aria-label="Hidden icons"><svg viewBox="0 0 16 10" className="w-4" fill="none" stroke="#fff" strokeWidth="1.800"><path d="M1 9l7-7.500L15 9" /></svg></button>
        <button aria-label="Network, volume and battery" className="ml-7 flex items-center gap-3">
          <svg viewBox="0 0 24 20" className="w-6" fill="none" stroke="#fff" strokeWidth="1.800"><path d="M1 7.500c6-7.300 16-7.300 22 0M4.500 11.300c4.300-4.800 10.700-4.800 15 0M8 14.800c2.300-2.500 5.700-2.500 8 0" /><circle cx="12" cy="17.500" r="1.900" fill="#fff" stroke="none" /></svg>
          <svg viewBox="0 0 24 20" className="w-6" fill="none" stroke="#fff" strokeWidth="1.700" strokeLinejoin="round"><path d="M1 7v6h4l6 5V2L5 7zM14 7c1.500 1.800 1.500 4.200 0 6M17 4.500c3 3.500 3 7.500 0 11M20 2c4.500 5 4.500 11 0 16" /></svg>
          <svg viewBox="0 0 25 22" className="w-[25px]" fill="none" stroke="#fff" strokeWidth="1.900"><path d="M10 5h9a2.500 2.500 0 0 1 2.500 2.500v8A2.500 2.500 0 0 1 19 18H4a2.500 2.500 0 0 1-2.500-2.500V11" /><path d="M22 9h2v5h-2zM4 15.500V12l4-3v6.500z" fill="#fff" stroke="none" /><path d="M5 0L1 7h3L2.500 11.500 8 4.500H5L7.500 0z" fill="#fff" stroke="none" /></svg>
        </button>
        <button className="ml-[25px] text-right text-[17px] leading-6">
          <span className="block">2:49 PM</span>
          <span className="block">1/15/2024</span>
        </button>
        <button aria-label="Notifications" className="ml-3.5"><svg viewBox="0 0 20 24" className="w-5" fill="#fba27f"><path d="M10 0a7.500 7.500 0 0 1 7.500 7.500V14l2.500 4.500H0L2.500 14V7.500A7.500 7.500 0 0 1 10 0zM6 20h8a4 4 0 0 1-8 0z" /></svg></button>
      </div>
    </footer>
  );
}

export default function App() {
  return (
    <div className="flex h-screen flex-col overflow-hidden font-['Open_Sans','Noto_Sans',sans-serif]">
      <TabStrip />
      <Toolbar />
      <Page />
      <Taskbar />
    </div>
  );
}
